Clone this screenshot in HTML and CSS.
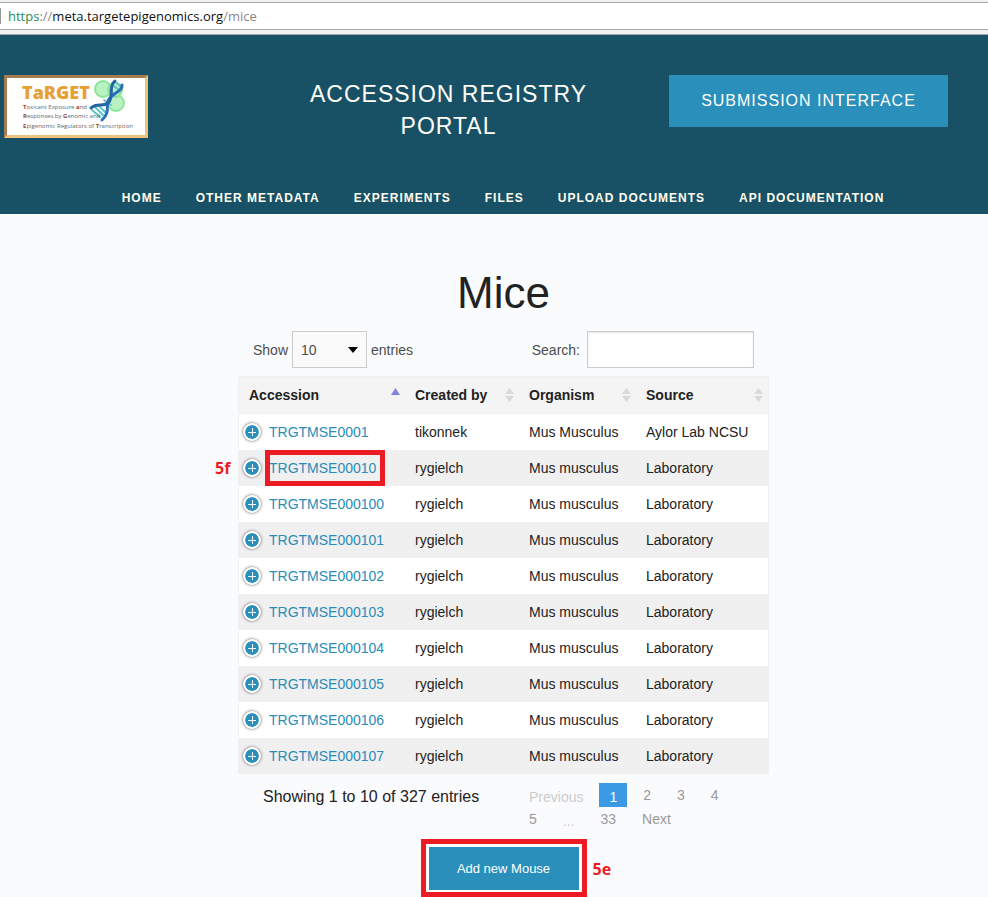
FILE: index.html
```html
<!DOCTYPE html>
<html lang="en">
<head>
<meta charset="utf-8">
<title>Mice - Accession Registry Portal</title>
<link rel="stylesheet" href="styles.css">
</head>
<body>
<div class="browser-bar">
  <div class="address"><span class="scheme">https</span><span class="muted">://</span>meta.targetepigenomics.org<span class="muted">/mice</span></div>
</div>

<header class="site-header">
  <div class="brand-row">
    <a class="logo" href="#" aria-label="TaRGET home">
      <svg viewBox="0 0 138 56" width="138" height="56">
        <g fill="#b9f2c2" stroke="#8ee59a" stroke-width="2">
          <circle cx="96" cy="11" r="8"/><circle cx="109" cy="25" r="8"/><circle cx="108" cy="12" r="7"/>
        </g>
        <g fill="none" stroke-linecap="round">
          <path d="M88 29l8 8M91 27l7 7M85 32l8 7M107 8l6 5M110 5l5 5M103 12l5 6M97 22l7 5" stroke="#5cc5c9" stroke-width="2"/>
          <path d="M95 42C104 34 98 27 102 21S116 13 115 7" stroke="#2a72b8" stroke-width="3"/>
          <path d="M84 30C90 24 97 30 102 24S101 8 108 3" stroke="#2664a4" stroke-width="3"/>
        </g>
        <text class="logo-name" x="15" y="21">TaRGET</text>
        <g class="logo-line">
          <text x="16" y="31"><tspan class="key">T</tspan>oxicant Exposure <tspan class="key">a</tspan>nd</text>
          <text x="16" y="40"><tspan class="key">R</tspan>esponses by <tspan class="key">G</tspan>enomic and</text>
          <text x="16" y="50"><tspan class="key">E</tspan>pigenomic Regulators of <tspan class="key">T</tspan>ranscription</text>
        </g>
      </svg>
    </a>
    <div class="portal-title">ACCESSION REGISTRY PORTAL</div>
    <button class="submission" type="button">SUBMISSION INTERFACE</button>
  </div>
  <nav class="main-nav">
    <a href="#">HOME</a>
    <a href="#">OTHER METADATA</a>
    <a href="#">EXPERIMENTS</a>
    <a href="#">FILES</a>
    <a href="#">UPLOAD DOCUMENTS</a>
    <a href="#">API DOCUMENTATION</a>
  </nav>
</header>

<main class="content">
  <h1>Mice</h1>
  <section class="listing">
    <div class="controls">
      <label class="control">Show
        <select><option>10</option><option>25</option><option>50</option></select>
        entries</label>
      <label class="control search">Search: <input type="search"></label>
    </div>

    <table class="mice">
      <colgroup><col class="c-accession"><col class="c-created"><col class="c-organism"><col class="c-source"></colgroup>
      <thead>
        <tr>
          <th class="sorted"><div class="head">Accession<svg width="9" height="14" viewBox="0 0 9 14"><path d="M4.500 0L9 7H0z"/></svg></div></th>
          <th><div class="head">Created by<svg width="9" height="14" viewBox="0 0 9 14"><path d="M4.500 0L9 6H0zM0 8h9l-4.500 6z"/></svg></div></th>
          <th><div class="head">Organism<svg width="9" height="14" viewBox="0 0 9 14"><path d="M4.500 0L9 6H0zM0 8h9l-4.500 6z"/></svg></div></th>
          <th><div class="head">Source<svg width="9" height="14" viewBox="0 0 9 14"><path d="M4.500 0L9 6H0zM0 8h9l-4.500 6z"/></svg></div></th>
        </tr>
      </thead>
      <tbody>
        <tr><td><div class="acc"><button class="expand" type="button" aria-label="Expand"></button><a href="#">TRGTMSE0001</a></div></td><td>tikonnek</td><td>Mus Musculus</td><td>Aylor Lab NCSU</td></tr>
        <tr><td><div class="acc"><button class="expand" type="button" aria-label="Expand"></button><a href="#">TRGTMSE00010</a><span class="callout-box"></span><span class="callout-label step-f">5f</span></div></td><td>rygielch</td><td>Mus musculus</td><td>Laboratory</td></tr>
        <tr><td><div class="acc"><button class="expand" type="button" aria-label="Expand"></button><a href="#">TRGTMSE000100</a></div></td><td>rygielch</td><td>Mus musculus</td><td>Laboratory</td></tr>
        <tr><td><div class="acc"><button class="expand" type="button" aria-label="Expand"></button><a href="#">TRGTMSE000101</a></div></td><td>rygielch</td><td>Mus musculus</td><td>Laboratory</td></tr>
        <tr><td><div class="acc"><button class="expand" type="button" aria-label="Expand"></button><a href="#">TRGTMSE000102</a></div></td><td>rygielch</td><td>Mus musculus</td><td>Laboratory</td></tr>
        <tr><td><div class="acc"><button class="expand" type="button" aria-label="Expand"></button><a href="#">TRGTMSE000103</a></div></td><td>rygielch</td><td>Mus musculus</td><td>Laboratory</td></tr>
        <tr><td><div class="acc"><button class="expand" type="button" aria-label="Expand"></button><a href="#">TRGTMSE000104</a></div></td><td>rygielch</td><td>Mus musculus</td><td>Laboratory</td></tr>
        <tr><td><div class="acc"><button class="expand" type="button" aria-label="Expand"></button><a href="#">TRGTMSE000105</a></div></td><td>rygielch</td><td>Mus musculus</td><td>Laboratory</td></tr>
        <tr><td><div class="acc"><button class="expand" type="button" aria-label="Expand"></button><a href="#">TRGTMSE000106</a></div></td><td>rygielch</td><td>Mus musculus</td><td>Laboratory</td></tr>
        <tr><td><div class="acc"><button class="expand" type="button" aria-label="Expand"></button><a href="#">TRGTMSE000107</a></div></td><td>rygielch</td><td>Mus musculus</td><td>Laboratory</td></tr>
      </tbody>
    </table>

    <div class="table-footer">
      <p class="summary">Showing 1 to 10 of 327 entries</p>
      <nav class="pages" aria-label="Pages">
        <span class="disabled">Previous</span>
        <a class="current" href="#">1</a>
        <a href="#">2</a>
        <a href="#">3</a>
        <a href="#">4</a>
        <a href="#">5</a>
        <span class="disabled gap">...</span>
        <a href="#">33</a>
        <a href="#">Next</a>
      </nav>
    </div>
  </section>

  <div class="add-frame">
    <button class="add" type="button">Add new Mouse</button>
    <span class="callout-label step-e">5e</span>
  </div>
</main>
</body>
</html>
```
FILE: styles.css
```css
* { box-sizing: border-box; }

body {
  margin: 0;
  background: #fafbfd;
  color: #222;
  font: 14px/20px "Liberation Sans", Arial, sans-serif;
}

a { color: #2a8cb7; text-decoration: none; }
button { border: 0; padding: 0; font: inherit; color: #fff; cursor: pointer; }

/* Address bar */
.browser-bar {
  padding: 2px 0 4px;
  background: #f2f2f2;
  border-bottom: 1px solid #a0a4a8;
}
.address {
  padding: 0 8px;
  background: #fff;
  border-top: 1px solid #a6a6a6;
  border-bottom: 1px solid #a6a6a6;
  background-image: linear-gradient(#999, #999);
  background-size: 1px 16px;
  background-position: 0 5px;
  background-repeat: no-repeat;
  color: #111;
  font: 13px/26px "Open Sans", sans-serif;
}
.scheme { color: #2f8a50; }
.muted { color: #888; }

/* Site header */
.site-header { background: #185066; padding-top: 40px; }
.brand-row {
  display: grid;
  grid-template-columns: 144px 1fr 279px;
  align-items: start;
  padding: 0 40px 0 4px;
}
.logo {
  display: block;
  height: 63px;
  border: 3px solid;
  border-color: #a57c50 #efc27b #efc27b #a57c50;
  background: #fff;
}
.logo svg { display: block; }
.logo-name { font: 800 18px "Open Sans", sans-serif; fill: #e6a034; }
.logo-line { font: 6px "Open Sans", sans-serif; fill: #666; }
.key { font-weight: 700; fill: #984a1c; }
.portal-title {
  justify-self: center;
  width: 300px;
  margin: 3px 0 0 80px;
  color: #fffff8;
  font-size: 23px;
  line-height: 32px;
  letter-spacing: 1px;
  text-align: center;
}
.submission {
  height: 52px;
  background: #2a8fba;
  font-size: 16px;
  letter-spacing: 1px;
}
.main-nav {
  display: flex;
  justify-content: center;
  gap: 34px;
  padding: 46px 0 6px 18px;
}
.main-nav a {
  color: #fffff0;
  font-size: 12px;
  font-weight: 700;
  letter-spacing: 1px;
}

/* Listing */
.content { padding-left: 19px; }
h1 {
  margin: 0;
  padding-top: 54px;
  font-size: 44px;
  font-weight: 400;
  line-height: 50px;
  text-align: center;
}
.listing { width: 531px; margin: 0 auto; }
.controls {
  display: flex;
  justify-content: space-between;
  padding: 13px 15px 8px;
}
.control {
  display: flex;
  align-items: center;
  gap: 4px;
  color: #4d4d4d;
}
.search { gap: 7px; }
.control select, .control input {
  height: 37px;
  margin: 0;
  border: 1px solid #ccc;
  border-radius: 0;
  color: #4d4d4d;
  font: inherit;
  appearance: none;
}
.control select {
  width: 75px;
  padding: 0 8px;
  background: #fafafa url("data:image/svg+xml,%3Csvg xmlns='http://www.w3.org/2000/svg' width='10' height='6'%3E%3Cpath d='M0 0h10L5 6z'/%3E%3C/svg%3E") no-repeat right 8px center;
}
.control input {
  width: 167px;
  background: #fff;
  box-shadow: inset 0 1px 2px rgba(0, 0, 0, .1);
}

.mice {
  width: 100%;
  table-layout: fixed;
  border-collapse: separate;
  border-spacing: 0;
  border: 1px solid #f0f0f0;
  border-bottom: 0;
  background: #fff;
}
.c-accession { width: 166px; }
.c-created { width: 114px; }
.c-organism { width: 117px; }
th, td { height: 36px; padding: 0 5px 0 10px; text-align: left; }
th { height: 37px; background: #f4f4f4; border-bottom: 1px solid #efefef; }
.head { display: flex; align-items: center; justify-content: space-between; }
.head svg { fill: #d9d9d9; }
.sorted .head svg { fill: #7f83dc; }
tbody tr:nth-child(even) { background: #f0f0f0; }
td:first-child { padding-left: 4px; }
.acc { position: relative; display: flex; align-items: center; gap: 8px; }
.expand {
  width: 18px;
  height: 18px;
  border: 2px solid #fff;
  border-radius: 50%;
  background:
    linear-gradient(#fff, #fff) center / 8px 1px no-repeat,
    linear-gradient(#fff, #fff) center / 1px 8px no-repeat,
    #2a8fba;
  background-clip: padding-box;
  box-shadow: 0 0 3px #555;
}

/* Step callouts */
.callout-box {
  position: absolute;
  top: -8px;
  left: 22px;
  width: 120px;
  height: 36px;
  border: 5px solid #ed1c24;
}
.callout-label {
  position: absolute;
  color: #ed1c24;
  font: 700 16px/20px "Open Sans", sans-serif;
}
.step-f { left: -28px; }
.step-e { left: 100%; margin-left: 11px; }

/* Footer */
.table-footer { display: flex; padding-top: 9px; }
.summary { flex: 0 0 281px; margin: 0; padding: 4px 0 0 25px; font-size: 16px; }
.pages {
  display: flex;
  flex: 0 0 236px;
  flex-wrap: wrap;
  column-gap: 6px;
}
.pages > * { height: 24px; padding: 0 10px; line-height: 24px; color: #999; }
.pages .current { background: #3a9be4; color: #fff; line-height: 28px; }
.pages .disabled { color: #ccc; line-height: 28px; }

.add-frame {
  position: relative;
  display: flex;
  align-items: center;
  width: max-content;
  margin: 8px auto 0;
  padding: 3px 3px 2px;
  border: 5px solid #ed1c24;
  background: #fff;
}
.add { width: 150px; height: 43px; background: #2a8fba; font-size: 13px; }
```
